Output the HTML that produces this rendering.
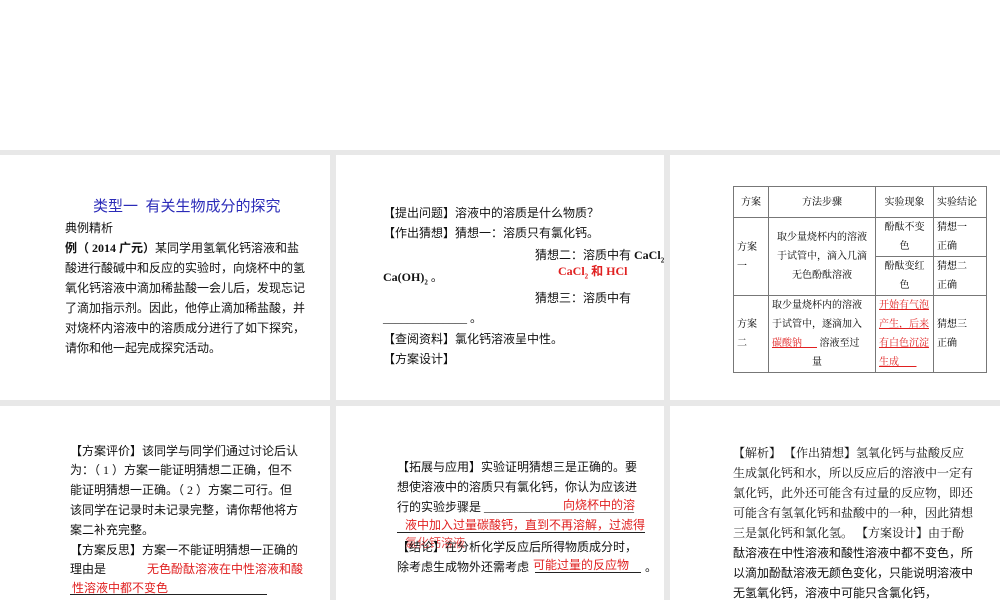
<!DOCTYPE html>
<html><head><meta charset="utf-8"><style>
body{margin:0;width:1000px;height:600px;background:#fff;position:relative;overflow:hidden;font-family:"Liberation Serif","Noto Sans CJK SC",sans-serif;}
.bg{position:absolute;left:0;top:150px;width:1000px;height:450px;background:#e8e8e8;}
.p{position:absolute;background:#fff;}
.l{position:absolute;font-size:12px;line-height:14px;white-space:nowrap;color:#111;}
.r{color:#e02020;}
.s{font-family:"Liberation Serif","Noto Serif CJK SC",serif;}
table{position:absolute;left:733px;top:186px;border-collapse:collapse;font-family:"Liberation Serif","Noto Serif CJK SC",serif;font-size:10px;line-height:19px;}
td{border:1px solid #777;padding:0 3px;vertical-align:middle;}
sub{font-size:7px;}
</style></head><body>
<div class="bg"></div>
<div class="p" style="left:0;top:155px;width:330px;height:245px"></div>
<div class="p" style="left:336px;top:155px;width:328px;height:245px"></div>
<div class="p" style="left:670px;top:155px;width:330px;height:245px"></div>
<div class="p" style="left:0;top:406px;width:330px;height:194px"></div>
<div class="p" style="left:336px;top:406px;width:328px;height:194px"></div>
<div class="p" style="left:670px;top:406px;width:330px;height:194px"></div>

<div class="l" style="left:93px;top:198px;font-size:15px;line-height:18px;color:#2b2bb8">类型一&nbsp;&nbsp;有关生物成分的探究</div>
<div class="l" style="left:65px;top:221px">典例精析</div>
<div class="l" style="left:65px;top:241px"><b>例（ 2014 广元）</b>某同学用氢氧化钙溶液和盐</div>
<div class="l" style="left:65px;top:261px">酸进行酸碱中和反应的实验时，向烧杯中的氢</div>
<div class="l" style="left:65px;top:281px">氧化钙溶液中滴加稀盐酸一会儿后，发现忘记</div>
<div class="l" style="left:65px;top:301px">了滴加指示剂。因此，他停止滴加稀盐酸，并</div>
<div class="l" style="left:65px;top:321px">对烧杯内溶液中的溶质成分进行了如下探究，</div>
<div class="l" style="left:65px;top:341px">请你和他一起完成探究活动。</div>

<div class="l" style="left:383px;top:206px">【提出问题】溶液中的溶质是什么物质？</div>
<div class="l" style="left:383px;top:226px">【作出猜想】猜想一：溶质只有氯化钙。</div>
<div class="l" style="left:535px;top:248px">猜想二：溶质中有 <b>CaCl<sub>2</sub></b></div>
<div class="l r" style="left:558px;top:264px"><b>CaCl<sub>2</sub> 和 HCl</b></div>
<div class="l" style="left:383px;top:270px"><b>Ca(OH)<sub>2</sub></b> 。</div>
<div class="l" style="left:535px;top:291px">猜想三：溶质中有</div>
<div class="l" style="left:383px;top:311px">______________ 。</div>
<div class="l" style="left:383px;top:332px">【查阅资料】氯化钙溶液呈中性。</div>
<div class="l" style="left:383px;top:352px">【方案设计】</div>

<table>
<tr><td style="width:28px;text-align:center;height:30px">方案</td><td style="width:100px;text-align:center">方法步骤</td><td style="width:51px;text-align:center">实验现象</td><td style="width:46px">实验结论</td></tr>
<tr><td rowspan="2">方案<br>一</td><td rowspan="2" style="text-align:center">取少量烧杯内的溶液<br>于试管中，滴入几滴<br>无色酚酞溶液</td><td style="text-align:center">酚酞不变<br>色</td><td>猜想一<br>正确</td></tr>
<tr><td style="text-align:center">酚酞变红<br>色</td><td>猜想二<br>正确</td></tr>
<tr><td>方案<br>二</td><td>取少量烧杯内的溶液<br>于试管中，逐滴加入<br><span class="r" style="text-decoration:underline">碳酸钠&nbsp;&nbsp;&nbsp;&nbsp;&nbsp;&nbsp;</span>&nbsp;溶液至过<br><span style="padding-left:40px">量</span></td><td class="r" style="text-decoration:underline">开始有气泡<br>产生，后来<br>有白色沉淀<br>生成&nbsp;&nbsp;&nbsp;&nbsp;&nbsp;&nbsp;&nbsp;</td><td>猜想三<br>正确</td></tr>
</table>

<div class="l" style="left:70px;top:444px">【方案评价】该同学与同学们通过讨论后认</div>
<div class="l" style="left:70px;top:463px">为：（ 1 ）方案一能证明猜想二正确，但不</div>
<div class="l" style="left:70px;top:483px">能证明猜想一正确。（ 2 ）方案二可行。但</div>
<div class="l" style="left:70px;top:503px">该同学在记录时未记录完整，请你帮他将方</div>
<div class="l" style="left:70px;top:523px">案二补充完整。</div>
<div class="l" style="left:70px;top:543px">【方案反思】方案一不能证明猜想一正确的</div>
<div class="l" style="left:70px;top:562px">理由是</div>
<div class="l r" style="left:147px;top:562px">无色酚酞溶液在中性溶液和酸</div>
<div class="l r" style="left:72px;top:581px">性溶液中都不变色</div>
<div style="position:absolute;left:70px;top:594px;width:197px;height:1px;background:#222"></div>

<div class="l" style="left:397px;top:460px">【拓展与应用】实验证明猜想三是正确的。要</div>
<div class="l" style="left:397px;top:480px">想使溶液中的溶质只有氯化钙，你认为应该进</div>
<div class="l" style="left:397px;top:500px">行的实验步骤是 _________________________</div>
<div class="l r" style="left:563px;top:498px">向烧杯中的溶</div>
<div class="l r" style="left:405px;top:518px">液中加入过量碳酸钙，直到不再溶解，过滤得</div>
<div style="position:absolute;left:397px;top:532px;width:248px;height:1px;background:#222"></div>
<div class="l r" style="left:405px;top:536px;opacity:.8">氯化钙溶液</div>
<div class="l" style="left:397px;top:540px">【结论】在分析化学反应后所得物质成分时，</div>
<div class="l" style="left:397px;top:560px">除考虑生成物外还需考虑</div>
<div class="l r" style="left:533px;top:558px">可能过量的反应物</div>
<div style="position:absolute;left:535px;top:572px;width:106px;height:1px;background:#222"></div>
<div class="l" style="left:645px;top:560px">。</div>

<div class="l s" style="left:733px;top:446px">【解析】 【作出猜想】氢氧化钙与盐酸反应</div>
<div class="l s" style="left:733px;top:466px">生成氯化钙和水，所以反应后的溶液中一定有</div>
<div class="l s" style="left:733px;top:486px">氯化钙，此外还可能含有过量的反应物，即还</div>
<div class="l s" style="left:733px;top:506px">可能含有氢氧化钙和盐酸中的一种，因此猜想</div>
<div class="l s" style="left:733px;top:526px">三是氯化钙和氯化氢。 【方案设计】由于酚</div>
<div class="l" style="left:733px;top:546px">酞溶液在中性溶液和酸性溶液中都不变色，所</div>
<div class="l" style="left:733px;top:566px">以滴加酚酞溶液无颜色变化，只能说明溶液中</div>
<div class="l" style="left:733px;top:586px">无氢氧化钙，溶液中可能只含氯化钙，</div>
</body></html>
